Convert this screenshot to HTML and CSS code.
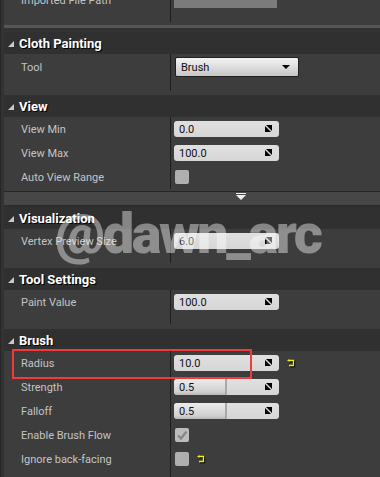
FILE: index.html
```html
<!doctype html>
<html>
<head>
	<title>Cloth Painting Details</title>
	<meta charset="utf-8"/>
	<link rel="stylesheet" href="styles.css">
</head>
<body>

<div class="panel">

	<!-- previous category, scrolled off the top -->
	<div class="section first">
		<div class="body pb3">
			<div class="rows ext10">
				<div class="row">
					<div class="label">Imported File Path</div>
					<div class="value"><div class="pathBox"></div></div>
				</div>
			</div>
		</div>
	</div>
	<div class="divider"></div>

	<div class="section">
		<div class="cat"><span class="tri"></span>Cloth Painting</div>
		<div class="body pb4">
			<div class="rows ext11">
				<div class="row tall">
					<div class="label">Tool</div>
					<div class="value">
						<div class="combo">Brush<span class="comboArrow"></span></div>
					</div>
				</div>
			</div>
		</div>
	</div>

	<div class="section">
		<div class="cat"><span class="tri"></span>View</div>
		<div class="body pb2">
			<div class="rows">
				<div class="row">
					<div class="label">View Min</div>
					<div class="value"><div class="num">0.0<svg class="spin" viewBox="0 0 7 7"><path d="M1 0H7V6Z"/><path d="M0 1V7H6Z"/></svg></div></div>
				</div>
				<div class="row">
					<div class="label">View Max</div>
					<div class="value"><div class="num">100.0<svg class="spin" viewBox="0 0 7 7"><path d="M1 0H7V6Z"/><path d="M0 1V7H6Z"/></svg></div></div>
				</div>
				<div class="row">
					<div class="label">Auto View Range</div>
					<div class="value"><div class="check"></div></div>
				</div>
			</div>
		</div>
		<div class="expander">
			<svg class="expandIcon" viewBox="0 0 10 8"><rect x="0" y="0" width="10" height="1"/><path d="M0 2H10L5 7Z"/></svg>
		</div>
	</div>

	<div class="section">
		<div class="cat"><span class="tri"></span>Visualization</div>
		<div class="body pb5">
			<div class="rows ext10">
				<div class="row">
					<div class="label">Vertex Preview Size</div>
					<div class="value"><div class="num">6.0<svg class="spin" viewBox="0 0 7 7"><path d="M1 0H7V6Z"/><path d="M0 1V7H6Z"/></svg></div></div>
				</div>
			</div>
		</div>
	</div>

	<div class="section">
		<div class="cat"><span class="tri"></span>Tool Settings</div>
		<div class="body pb5">
			<div class="rows ext10">
				<div class="row">
					<div class="label">Paint Value</div>
					<div class="value"><div class="num">100.0<svg class="spin" viewBox="0 0 7 7"><path d="M1 0H7V6Z"/><path d="M0 1V7H6Z"/></svg></div></div>
				</div>
			</div>
		</div>
	</div>

	<div class="section">
		<div class="cat"><span class="tri"></span>Brush</div>
		<div class="body">
			<div class="rows ext10">
				<div class="row">
					<div class="label">Radius</div>
					<div class="value">
						<div class="num">10.0<svg class="spin" viewBox="0 0 7 7"><path d="M1 0H7V6Z"/><path d="M0 1V7H6Z"/></svg></div>
						<svg class="reset" viewBox="0 0 9 8"><path d="M2 1.5H6.5V6.5H2"/><path class="head" d="M0 1.5L2.5 0V3Z"/></svg>
					</div>
				</div>
				<div class="row">
					<div class="label">Strength</div>
					<div class="value"><div class="num slider"><span class="fill" style="width: 50%"></span><span class="numText">0.5</span><svg class="spin" viewBox="0 0 7 7"><path d="M1 0H7V6Z"/><path d="M0 1V7H6Z"/></svg></div></div>
				</div>
				<div class="row">
					<div class="label">Falloff</div>
					<div class="value"><div class="num slider"><span class="fill" style="width: 50%"></span><span class="numText">0.5</span><svg class="spin" viewBox="0 0 7 7"><path d="M1 0H7V6Z"/><path d="M0 1V7H6Z"/></svg></div></div>
				</div>
				<div class="row">
					<div class="label">Enable Brush Flow</div>
					<div class="value"><div class="check on"><svg viewBox="0 0 14 14"><path d="M3 7.5L6 10.5L11.5 3.5"/></svg></div></div>
				</div>
				<div class="row">
					<div class="label">Ignore back-facing</div>
					<div class="value">
						<div class="check"></div>
						<svg class="reset" viewBox="0 0 9 8"><path d="M2 1.5H6.5V6.5H2"/><path class="head" d="M0 1.5L2.5 0V3Z"/></svg>
					</div>
				</div>
			</div>
		</div>
	</div>

</div>

<!-- overlays: annotation box and watermark -->
<div class="mark"></div>
<div class="watermark">@dawn_arc</div>

</body>
</html>
```

FILE: styles.css
```css
* {
    margin: 0;
    box-sizing: border-box;
}

body {
    background-color: #333;
    font-family: Roboto, "Liberation Sans", sans-serif;
    overflow: hidden;
    height: 477px;
}

.panel {
    border-left: 1px solid #262626;
    padding-left: 3px;
    background-color: #333;
    min-height: 477px;
}

.first {
    margin-top: -12px;
}

.divider {
    height: 3px;
    background-color: #565656;
    margin-bottom: 4px;
}

.cat {
    height: 22px;
    background-color: #303030;
    display: flex;
    align-items: center;
    color: #fff;
    font-size: 13px;
    font-weight: 700;
    text-shadow: 1px 1px 0 #000;
}

.tri {
    width: 0;
    height: 0;
    border-left: 6px solid transparent;
    border-bottom: 6px solid #c8c8c8;
    margin: 1px 5px 0 4px;
}

.body {
    background-color: #3d3d3d;
}
.pb2 { padding-bottom: 2px; }
.pb3 { padding-bottom: 3px; }
.pb4 { padding-bottom: 4px; }
.pb5 { padding-bottom: 5px; }

.rows {
    background: linear-gradient(#1e1e1e, #1e1e1e) 166px 0 / 1px 100% no-repeat;
}
.ext10 { padding-bottom: 10px; }
.ext11 { padding-bottom: 11px; }

.row {
    display: grid;
    grid-template-columns: 166px 1fr;
    height: 24px;
    align-items: center;
}
.row.tall {
    height: 26px;
}

.label {
    padding-left: 17px;
    color: #c4c4c4;
    font-size: 11px;
    white-space: nowrap;
}

.value {
    padding-left: 4px;
    display: flex;
    align-items: center;
}

.pathBox {
    width: 103px;
    height: 16px;
    background-color: #7b7b7b;
}

.combo {
    position: relative;
    margin-left: 1px;
    width: 124px;
    height: 20px;
    border: 1px solid #202020;
    border-radius: 2px;
    background: linear-gradient(#f4f4f4, #c6c6c6);
    color: #111;
    font-size: 11px;
    padding-left: 5px;
    display: flex;
    align-items: center;
}

.comboArrow {
    position: absolute;
    right: 8px;
    top: 7px;
    border-left: 4px solid transparent;
    border-right: 4px solid transparent;
    border-top: 4px solid #000;
}

.num {
    position: relative;
    width: 105px;
    height: 16px;
    border-radius: 3px;
    background: linear-gradient(#e0e0e0, #d6d6d6);
    color: #111;
    font-size: 11px;
    padding-left: 5px;
    display: flex;
    align-items: center;
    overflow: hidden;
}

.spin {
    position: absolute;
    right: 7px;
    top: 4px;
    width: 7px;
    height: 7px;
    fill: #000;
}

.slider {
    padding-left: 0;
}

.fill {
    position: absolute;
    left: 0;
    top: 0;
    bottom: 0;
    background: linear-gradient(#ececec, #d0d0d0 80%, #b4b4b4);
    border-right: 2px solid #a8a8a8;
    border-radius: 3px 0 0 3px;
}

.numText {
    position: relative;
    padding-left: 5px;
}

.check {
    margin-left: 1px;
    width: 14px;
    height: 14px;
    border-radius: 2px;
    background-color: #afafaf;
}

.check.on {
    background-color: #bcbcbc;
}

.check svg {
    display: block;
    width: 14px;
    height: 14px;
    fill: none;
    stroke: #868686;
    stroke-width: 2.2;
}

.reset {
    width: 9px;
    height: 8px;
    margin-left: 8px;
    fill: none;
    stroke: #f2f200;
    stroke-width: 1.3;
    filter: drop-shadow(1px 1px 0 #000);
}

.reset .head {
    fill: #f2f200;
    stroke: none;
}

.expander {
    height: 16px;
    border-top: 1px solid #262626;
    border-bottom: 2px solid #2c2c2c;
    background-color: #474747;
    display: flex;
    justify-content: center;
    padding-top: 1px;
    padding-left: 98px;
}

.expandIcon {
    width: 10px;
    height: 8px;
    fill: #f0f0f0;
}

.mark {
    position: absolute;
    left: 12px;
    top: 349px;
    width: 240px;
    height: 30px;
    border: 2px solid #ef3b3b;
}

.watermark {
    position: absolute;
    left: 55px;
    top: 206px;
    font-family: Roboto, sans-serif;
    font-size: 56px;
    font-weight: 900;
    line-height: 56px;
    letter-spacing: -2.5px;
    color: rgba(255, 255, 255, 0.42);
    white-space: nowrap;
}
```
